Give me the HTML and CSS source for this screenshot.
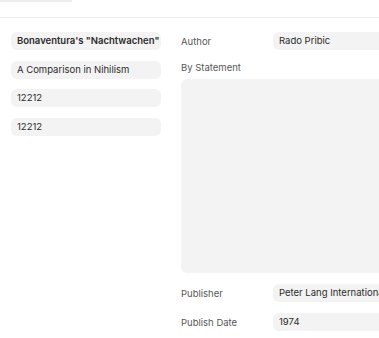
FILE: index.html
```html
<!DOCTYPE html>
<html>
<head>
<meta charset="utf-8">
<link rel="stylesheet" href="styles.css">
</head>
<body>
<div class="page">
  <header class="topbar"><div class="tab-stub"></div></header>
  <main class="content">
    <section class="left">
      <div class="field strong">Bonaventura's "Nachtwachen"</div>
      <div class="field">A Comparison in Nihilism</div>
      <div class="field">12212</div>
      <div class="field">12212</div>
    </section>
    <section class="right">
      <div class="row">
        <label class="label">Author</label>
        <div class="input">Rado Pribic</div>
      </div>
      <div class="block">
        <label class="label">By Statement</label>
        <div class="textarea"></div>
      </div>
      <div class="row">
        <label class="label">Publisher</label>
        <div class="input">Peter Lang International Academic Publishers</div>
      </div>
      <div class="row">
        <label class="label">Publish Date</label>
        <div class="input">1974</div>
      </div>
    </section>
  </main>
</div>
</body>
</html>
```

FILE: styles.css
```css
* { box-sizing: border-box; }
html, body { margin: 0; padding: 0; background: #fff; overflow: hidden; }
body { font-family: Inter, "Noto Sans", sans-serif; font-size: 9.5px; color: #2b2b2b; }
.page { width: 379px; height: 338px; overflow: hidden; }
.topbar { height: 18px; border-bottom: 1px solid #ededed; }
.tab-stub { width: 72px; height: 2px; background: #ececec; }
.content { display: flex; padding: 14px 0 0 11px; gap: 20px; }
.left { width: 150px; flex: none; display: flex; flex-direction: column; gap: 10.7px; }
.field { height: 18px; background: #f3f3f3; border-radius: 6px; padding: 0 6px; line-height: 18px; white-space: nowrap; overflow: hidden; }
.field.strong { font-weight: 600; }
.right { width: 300px; flex: none; display: flex; flex-direction: column; }
.row { display: flex; align-items: center; height: 18px; }
.row + .row { margin-top: 11px; }
.label { width: 92px; flex: none; color: #575757; }
.input { flex: 1; height: 18px; background: #f3f3f3; border-radius: 6px; padding: 0 6px; line-height: 18px; white-space: nowrap; overflow: hidden; }
.block { margin-top: 11px; display: flex; flex-direction: column; }
.block .label { height: 18px; line-height: 14px; }
.textarea { height: 194px; background: #f3f3f3; border-radius: 6px; margin-bottom: 11px; }
```
